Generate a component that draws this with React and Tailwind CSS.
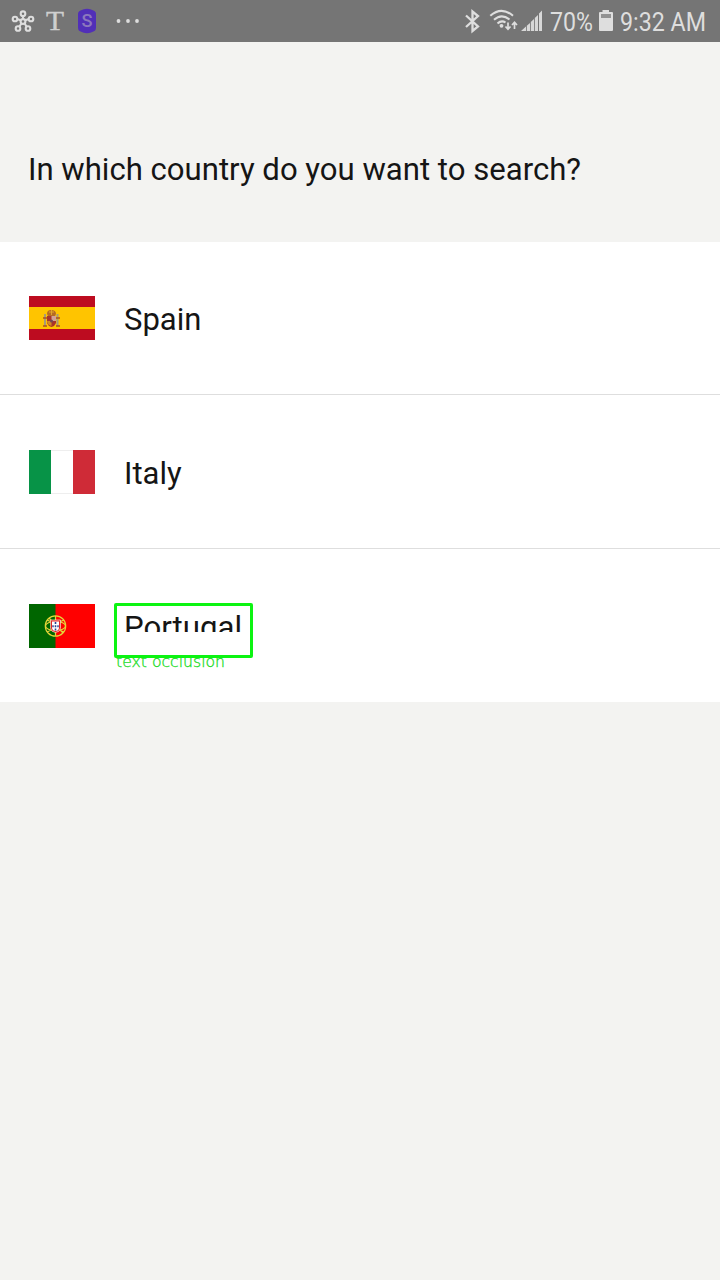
import React from 'react';

function StatusBar() {
  return (
    <div className="flex h-[42px] w-full bg-[#757575] text-[#dedede]">
      <svg width="545" height="42" viewBox="0 0 545 42" fill="none" className="shrink-0">
        <g stroke="#dedede" strokeWidth="2.100">
          <path d="M23 21V15M23 21L15.5 18.5M23 21L30.5 18.5M23 21L18.500 28M23 21L27.500 28" />
          <g fill="#757575">
            <circle cx="23" cy="13.700" r="2.300" />
            <circle cx="15" cy="19" r="2.300" />
            <circle cx="31" cy="19" r="2.300" />
            <circle cx="18" cy="28.500" r="2.300" />
            <circle cx="28" cy="28.500" r="2.300" />
            <circle cx="23" cy="21.500" r="2.400" />
          </g>
        </g>
        <text x="46" y="30" textLength="18" lengthAdjust="spacingAndGlyphs" fill="#cfcfcf" stroke="#cfcfcf" strokeWidth=".4" fontFamily="Liberation Serif, serif" fontSize="27">T</text>
        <path d="M83 9.500Q87 8 91 9.500L94.500 11Q96 12 96 14V27.500Q96 30 94.500 31L91 32.500Q87 34 83 32.500L79.500 31Q78 30 78 27.500V14Q78 12 79.500 11Z" fill="#512fb8" />
        <text x="81.500" y="27" textLength="11" lengthAdjust="spacingAndGlyphs" fill="#8c78bd" fontFamily="Roboto, sans-serif" fontWeight="500" fontSize="18">S</text>
        <g fill="#dedede">
          <circle cx="118.500" cy="21" r="1.900" />
          <circle cx="128" cy="21" r="1.900" />
          <circle cx="137" cy="21" r="1.900" />
        </g>
        <path d="M466 15.500L478 26.500L472.500 31V11.500L478 16L466 27" stroke="#dedede" strokeWidth="2.300" />
        <g stroke="#dedede" strokeWidth="2.100">
          <path d="M490.300 15.700Q501.500 6 513 15.700" />
          <path d="M494 19.800Q501.500 13 509.500 19.500" />
          <path d="M497.500 23.500Q501.500 19.800 505.500 22.500" />
        </g>
        <circle cx="501.500" cy="25.800" r="1.900" fill="#dedede" />
        <path d="M508 22.500V29M505.500 26.500L508 29.200L510.500 26.500M514.500 29V22.500M512 25L514.500 22.300L517 25" stroke="#dedede" strokeWidth="1.700" />
        <path d="M521 31L526 26.500V31ZM526.800 25.800L530 23V31H526.800ZM530.800 22L534 19V31H530.800ZM534.800 18L538 15V31H534.800ZM539 13.500L542 10.500V31H539Z" fill="#d8d8d8" />
      </svg>
      <svg width="175" height="42" viewBox="545 0 175 42" className="shrink-0">
        <g fill="#dedede" fontFamily="Roboto, sans-serif" fontSize="26">
          <text x="550" y="31" textLength="43" lengthAdjust="spacingAndGlyphs">70%</text>
          <text x="620" y="31" textLength="86" lengthAdjust="spacingAndGlyphs">9:32 AM</text>
        </g>
        <path d="M602.500 10H609V12H612Q613 12 613 13V30Q613 31 612 31H600Q599 31 599 30V13Q599 12 600 12H602.500Z" fill="#dedede" />
        <path d="M601 14H611V18H601Z" fill="#929292" />
      </svg>
    </div>
  );
}

function SpainFlag() {
  return (
    <svg width="66" height="44" viewBox="0 0 66 44">
      <path fill="#bd0c20" d="M0 0H66V44H0Z" />
      <path fill="#ffc400" d="M0 11H66V33H0Z" />
      <path d="M15 18H17V30H15ZM27.500 18H29.500V30H27.500Z" fill="#a79a78" />
      <path d="M14 22H18M27 22H31M14 30H18M27 30H31" stroke="#ad5020" strokeWidth="1.400" />
      <path d="M18 18Q18 14 22 14Q27 14 27 18L26 20H19Z" fill="#b56a24" />
      <path d="M20 16H25M22.500 14V19" stroke="#e0a52c" />
      <path d="M18 20H27V27Q26 30 22.500 31Q19 30 18 27Z" fill="#aa3429" />
      <path d="M22.500 20H27V25H22.500Z" fill="#d2a295" />
      <path d="M18 25H22.500V30Q18 29 18 25Z" fill="#d28b22" />
      <circle cx="22.500" cy="25" r="1.500" fill="#714956" />
    </svg>
  );
}

function ItalyFlag() {
  return (
    <svg width="66" height="44" viewBox="0 0 66 44">
      <path fill="#fff" d="M0 0H66V44H0Z" />
      <path stroke="#eeeeee" d="M22 .5H44M22 43.500H44" />
      <path fill="#079347" d="M0 0H22V44H0Z" />
      <path fill="#cf2b37" d="M44 0H66V44H44Z" />
    </svg>
  );
}

function PortugalFlag() {
  return (
    <svg width="66" height="44" viewBox="0 0 66 44">
      <path fill="#ff0000" d="M0 0H66V44H0Z" />
      <path fill="#006600" d="M0 0H26.500V44H0Z" />
      <g fill="none" stroke="#e5d338" strokeWidth="1.200">
        <circle cx="26.500" cy="22" r="10.200" />
        <ellipse cx="26.500" cy="22" rx="10" ry="4.500" />
        <path d="M18 16Q26.500 21 35 16M18 28Q26.500 23 35 28M26.500 12V32M20 14L34 29" />
      </g>
      <path d="M21.500 16H31.500V24Q31 28 26.500 28.500Q22 28 21.500 24Z" fill="#e32626" stroke="#f4e7d0" strokeWidth=".7" />
      <path d="M23 17.500H30V24Q29.500 27 26.500 27Q23.500 27 23 24Z" fill="#fff" />
      <path d="M25.700 18H27.300V20H25.700ZM25.700 21.200H27.300V23.200H25.700ZM25.700 24.400H27.300V26.400H25.700ZM23.300 21.200H24.700V23.200H23.300ZM28.300 21.200H29.700V23.200H28.300Z" fill="#28458f" />
    </svg>
  );
}

export default function App() {
  return (
    <main className="flex h-[1280px] w-[720px] flex-col overflow-hidden bg-[#f3f3f1] font-[Roboto,sans-serif] text-[#151515]">
      <StatusBar />
      <header className="flex h-[200px] items-center px-7 pt-[56px]">
        <h1 className="text-[31.120px] leading-[40px] font-normal whitespace-nowrap">In which country do you want to search?</h1>
      </header>
      <ul className="bg-white text-[31px] leading-[38px]">
        <li className="flex h-[153px] items-center gap-[29px] border-b border-[#dedede] pl-[29px]">
          <SpainFlag />
          <span className="pt-[3px]">Spain</span>
        </li>
        <li className="flex h-[154px] items-center gap-[29px] border-b border-[#dedede] pl-[29px]">
          <ItalyFlag />
          <span className="pt-[5px]">Italy</span>
        </li>
        <li className="flex h-[153px] items-center gap-[29px] pl-[29px]">
          <PortugalFlag />
          <div className="relative h-[38px]">
            <div className="mt-[2px] h-[23px] overflow-hidden text-[31.200px]">Portugal</div>
            <svg className="absolute top-[48px] -left-[10px]" width="116" height="16">
              <text x="2" y="12" textLength="109" lengthAdjust="spacingAndGlyphs" fontFamily="DejaVu Sans, sans-serif" fontWeight="200" fontSize="15" fill="#20dc25" stroke="#20dc25" strokeWidth=".3">text occlusion</text>
            </svg>
            <div className="absolute top-[-4px] -left-[10px] h-[55px] w-[139px] rounded-[2px] border-[3px] border-[#0cf412]" />
          </div>
        </li>
      </ul>
    </main>
  );
}
